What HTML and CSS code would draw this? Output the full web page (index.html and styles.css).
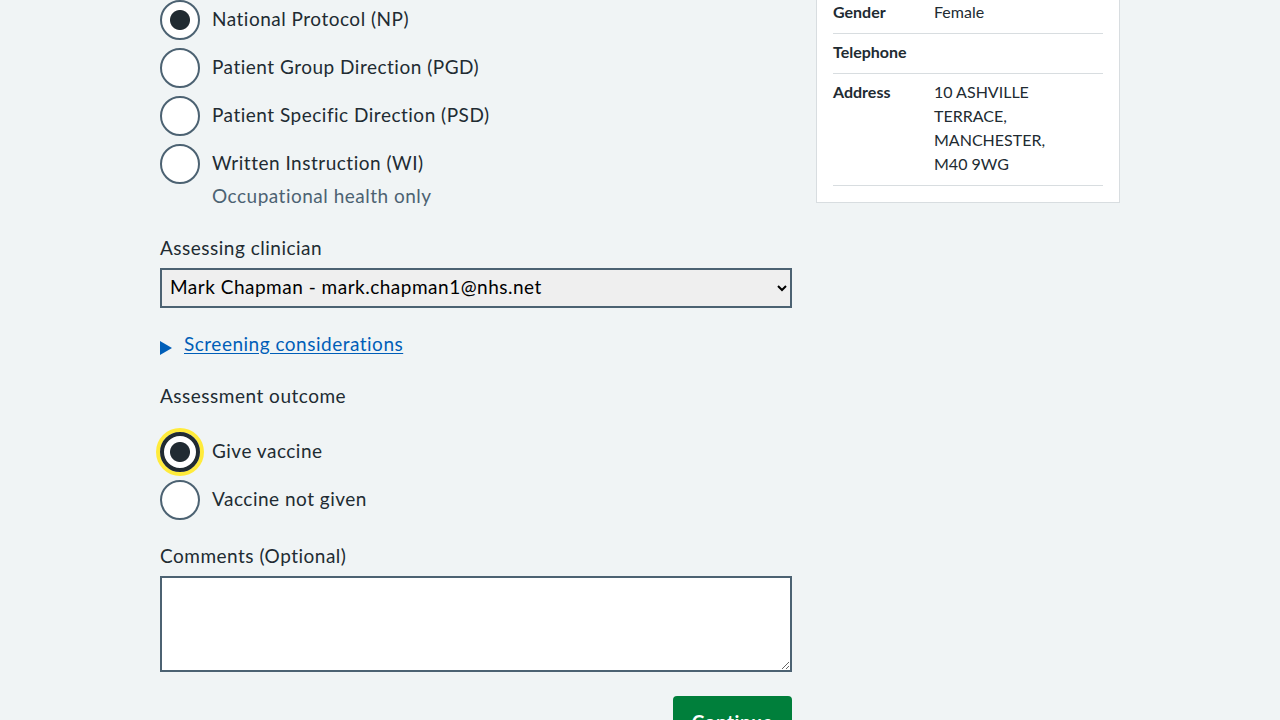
FILE: index.html
```html
<!DOCTYPE html>
<html lang="en">
<head>
<meta charset="utf-8">
<title>Record vaccination</title>
<link rel="stylesheet" href="styles.css">
</head>
<body>
<div class="page">
  <main class="main">
    <div class="radios">
      <label class="radio-item"><input type="radio" name="mech" class="radio-input" checked><span class="radio-label">National Protocol (NP)</span></label>
      <label class="radio-item"><input type="radio" name="mech" class="radio-input"><span class="radio-label">Patient Group Direction (PGD)</span></label>
      <label class="radio-item"><input type="radio" name="mech" class="radio-input"><span class="radio-label">Patient Specific Direction (PSD)</span></label>
      <div class="radio-block">
        <label class="radio-item last"><input type="radio" name="mech" class="radio-input"><span class="radio-label">Written Instruction (WI)</span></label>
        <div class="radio-hint">Occupational health only</div>
      </div>
    </div>

    <div class="form-group">
      <label class="field-label" for="clin">Assessing clinician</label>
      <select id="clin" class="select">
        <option>Mark Chapman - mark.chapman1@nhs.net</option>
      </select>
    </div>

    <div class="details">
      <svg class="details-arrow" width="12" height="14" viewBox="0 0 12 14"><polygon points="0,0 12,7 0,14" fill="#005eb8"/></svg>
      <a href="#" class="details-link">Screening considerations</a>
    </div>

    <fieldset class="fieldset">
      <legend class="legend">Assessment outcome</legend>
      <div class="radios">
        <label class="radio-item"><input type="radio" name="outcome" class="radio-input focused" checked><span class="radio-label">Give vaccine</span></label>
        <label class="radio-item last"><input type="radio" name="outcome" class="radio-input"><span class="radio-label">Vaccine not given</span></label>
      </div>
    </fieldset>

    <div class="form-group">
      <label class="field-label" for="comments">Comments (Optional)</label>
      <textarea id="comments" class="textarea" rows="4"></textarea>
    </div>

    <div class="actions">
      <button class="button">Continue</button>
    </div>
  </main>

  <aside class="side">
    <div class="card">
      <dl class="summary">
        <div class="summary-row"><dt class="key">Name</dt><dd class="value">JANE SMITH</dd></div>
        <div class="summary-row"><dt class="key">NHS number</dt><dd class="value">999 123 4567</dd></div>
        <div class="summary-row"><dt class="key">Date of birth</dt><dd class="value">1 January 1980</dd></div>
        <div class="summary-row"><dt class="key">Gender</dt><dd class="value">Female</dd></div>
        <div class="summary-row"><dt class="key">Telephone</dt><dd class="value"></dd></div>
        <div class="summary-row"><dt class="key">Address</dt><dd class="value">10 ASHVILLE TERRACE, MANCHESTER, M40 9WG</dd></div>
      </dl>
    </div>
  </aside>
</div>
</body>
</html>
```

FILE: styles.css
```css
* { box-sizing: border-box; }

html, body {
  margin: 0;
  background: #f0f4f5;
  color: #212b32;
  font-family: Lato, "Liberation Sans", sans-serif;
  overflow: hidden;
}

.page {
  width: 960px;
  margin: 0 auto;
  display: grid;
  grid-template-columns: 632px 304px;
  column-gap: 24px;
  align-items: start;
}

.main { display: flex; flex-direction: column; }

.radios { display: flex; flex-direction: column; gap: 8px; }

.radio-item {
  display: flex;
  align-items: center;
  gap: 12px;
  min-height: 40px;
  cursor: pointer;
}

.radio-input {
  appearance: none;
  -webkit-appearance: none;
  margin: 0;
  flex: 0 0 40px;
  width: 40px;
  height: 40px;
  border: 2px solid #4c6272;
  border-radius: 50%;
  background: #fff;
}

.radio-input:checked {
  background: radial-gradient(circle, #212b32 0 9.5px, #fff 10.5px);
}

.radio-input.focused {
  border: 4px solid #212b32;
  box-shadow: 0 0 0 4px #ffeb3b;
  background: radial-gradient(circle, #212b32 0 9.5px, #fff 10.5px);
}

.radio-label {
  font-size: 19px;
  letter-spacing: 0.5px;
  line-height: 28px;
  padding-bottom: 2px;
}

.radio-hint {
  padding-left: 52px;
  font-size: 19px;
  letter-spacing: 0.5px;
  line-height: 24px;
  padding-bottom: 4px;
  color: #4c6272;
}

.form-group { margin-top: 24px; display: flex; flex-direction: column; }

.field-label {
  font-size: 19px;
  letter-spacing: 0.5px;
  line-height: 24px;
  padding-bottom: 4px;
  margin-bottom: 4px;
}

.select {
  width: 100%;
  height: 40px;
  border: 2px solid #4c6272;
  border-radius: 0;
  background-color: #efefef;
  color: #000;
  font-family: inherit;
  font-size: 19px;
  letter-spacing: 0.5px;
  padding: 0 4px 4px;
  margin: 0;
}

.details {
  margin-top: 24px;
  display: flex;
  align-items: center;
  gap: 12px;
  height: 28px;
}

.details-arrow { margin-top: 4px; }

.details-link {
  color: #005eb8;
  font-size: 19px;
  letter-spacing: 0.5px;
  line-height: 24px;
  padding-bottom: 4px;
  text-decoration: underline;
  text-underline-offset: 2px;
}

.fieldset {
  border: 0;
  margin: 24px 0 0;
  padding: 0;
  min-width: 0;
}

.legend {
  padding: 0 0 4px;
  font-size: 19px;
  letter-spacing: 0.5px;
  line-height: 24px;
  margin-bottom: 20px;
}

.textarea {
  width: 100%;
  height: 96px;
  border: 2px solid #4c6272;
  border-radius: 0;
  background: #fff;
  margin: 0;
  font-family: inherit;
  font-size: 19px;
  padding: 4px;
  display: block;
}

.actions {
  margin-top: 24px;
  display: flex;
  justify-content: flex-end;
}

.button {
  background: #007f3b;
  color: #fff;
  border: 0;
  border-radius: 4px;
  box-shadow: 0 4px 0 #00401e;
  font-family: inherit;
  font-weight: 700;
  font-size: 19px;
  letter-spacing: 0.5px;
  line-height: 24px;
  padding: 14px 19px 12px;
  cursor: pointer;
}

.side { margin-top: -143px; }

.card {
  background: #fff;
  border: 1px solid #d8dde0;
  padding: 16px;
}

.summary { margin: 0; }

.summary-row {
  display: grid;
  grid-template-columns: 101px 135px;
  border-bottom: 1px solid #d8dde0;
  padding: 6px 0 9px;
  font-size: 16px;
  line-height: 24px;
}

.key { font-weight: 700; margin: 0; }
.value { margin: 0; }
```
